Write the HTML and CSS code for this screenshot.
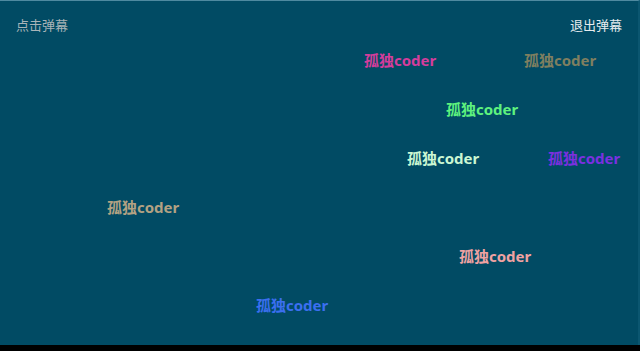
FILE: index.html
```html
<!DOCTYPE html>
<html lang="zh-CN">
  <head>
    <meta charset="UTF-8" />
    <meta name="viewport" content="width=device-width, initial-scale=1.0" />
    <title>弹幕</title>
    <link rel="stylesheet" href="styles.css">
  </head>
  <body>
    <main class="stage">
      <header class="toolbar">
        <span class="btn start">点击弹幕</span>
        <span class="btn stop">退出弹幕</span>
      </header>
      <section class="danmaku" id="danmaku">
        <span class="item" style="left: 364px; top: 49px; color: #d43d9c;">孤独coder</span>
        <span class="item" style="left: 524px; top: 49px; color: #7f7f60;">孤独coder</span>
        <span class="item" style="left: 446px; top: 98px; color: #5ef27e;">孤独coder</span>
        <span class="item" style="left: 407px; top: 147px; color: #cbf7d3;">孤独coder</span>
        <span class="item" style="left: 548px; top: 147px; color: #7b30e0;">孤独coder</span>
        <span class="item" style="left: 107px; top: 196px; color: #b3a283;">孤独coder</span>
        <span class="item" style="left: 459px; top: 245px; color: #f0a2a2;">孤独coder</span>
        <span class="item" style="left: 256px; top: 294px; color: #3b6ff0;">孤独coder</span>
      </section>
    </main>
    <footer class="bottom"></footer>
  </body>
</html>
```

FILE: styles.css
```css
/* styles.css */
body {
  margin: 0;
  background-color: #000;
  font-family: "Noto Sans", "Noto Sans CJK SC", sans-serif;
}

.stage {
  position: relative;
  height: 344px;
  background-color: #014b64;
  border-top: 1px solid #4f8aa0;
  border-right: 2px solid #0b5670;
  overflow: hidden;
}

.toolbar {
  display: flex;
  justify-content: space-between;
  padding: 14px 16px 0 16px;
  font-size: 13px;
  line-height: 20px;
}

.btn {
  cursor: pointer;
}

.start {
  color: #a9b4b8;
}

.stop {
  color: #e6ecee;
}

.item {
  position: absolute;
  font-size: 15px;
  font-weight: bold;
  line-height: 20px;
  white-space: nowrap;
}

.bottom {
  height: 6px;
  background-color: #000;
}
```
